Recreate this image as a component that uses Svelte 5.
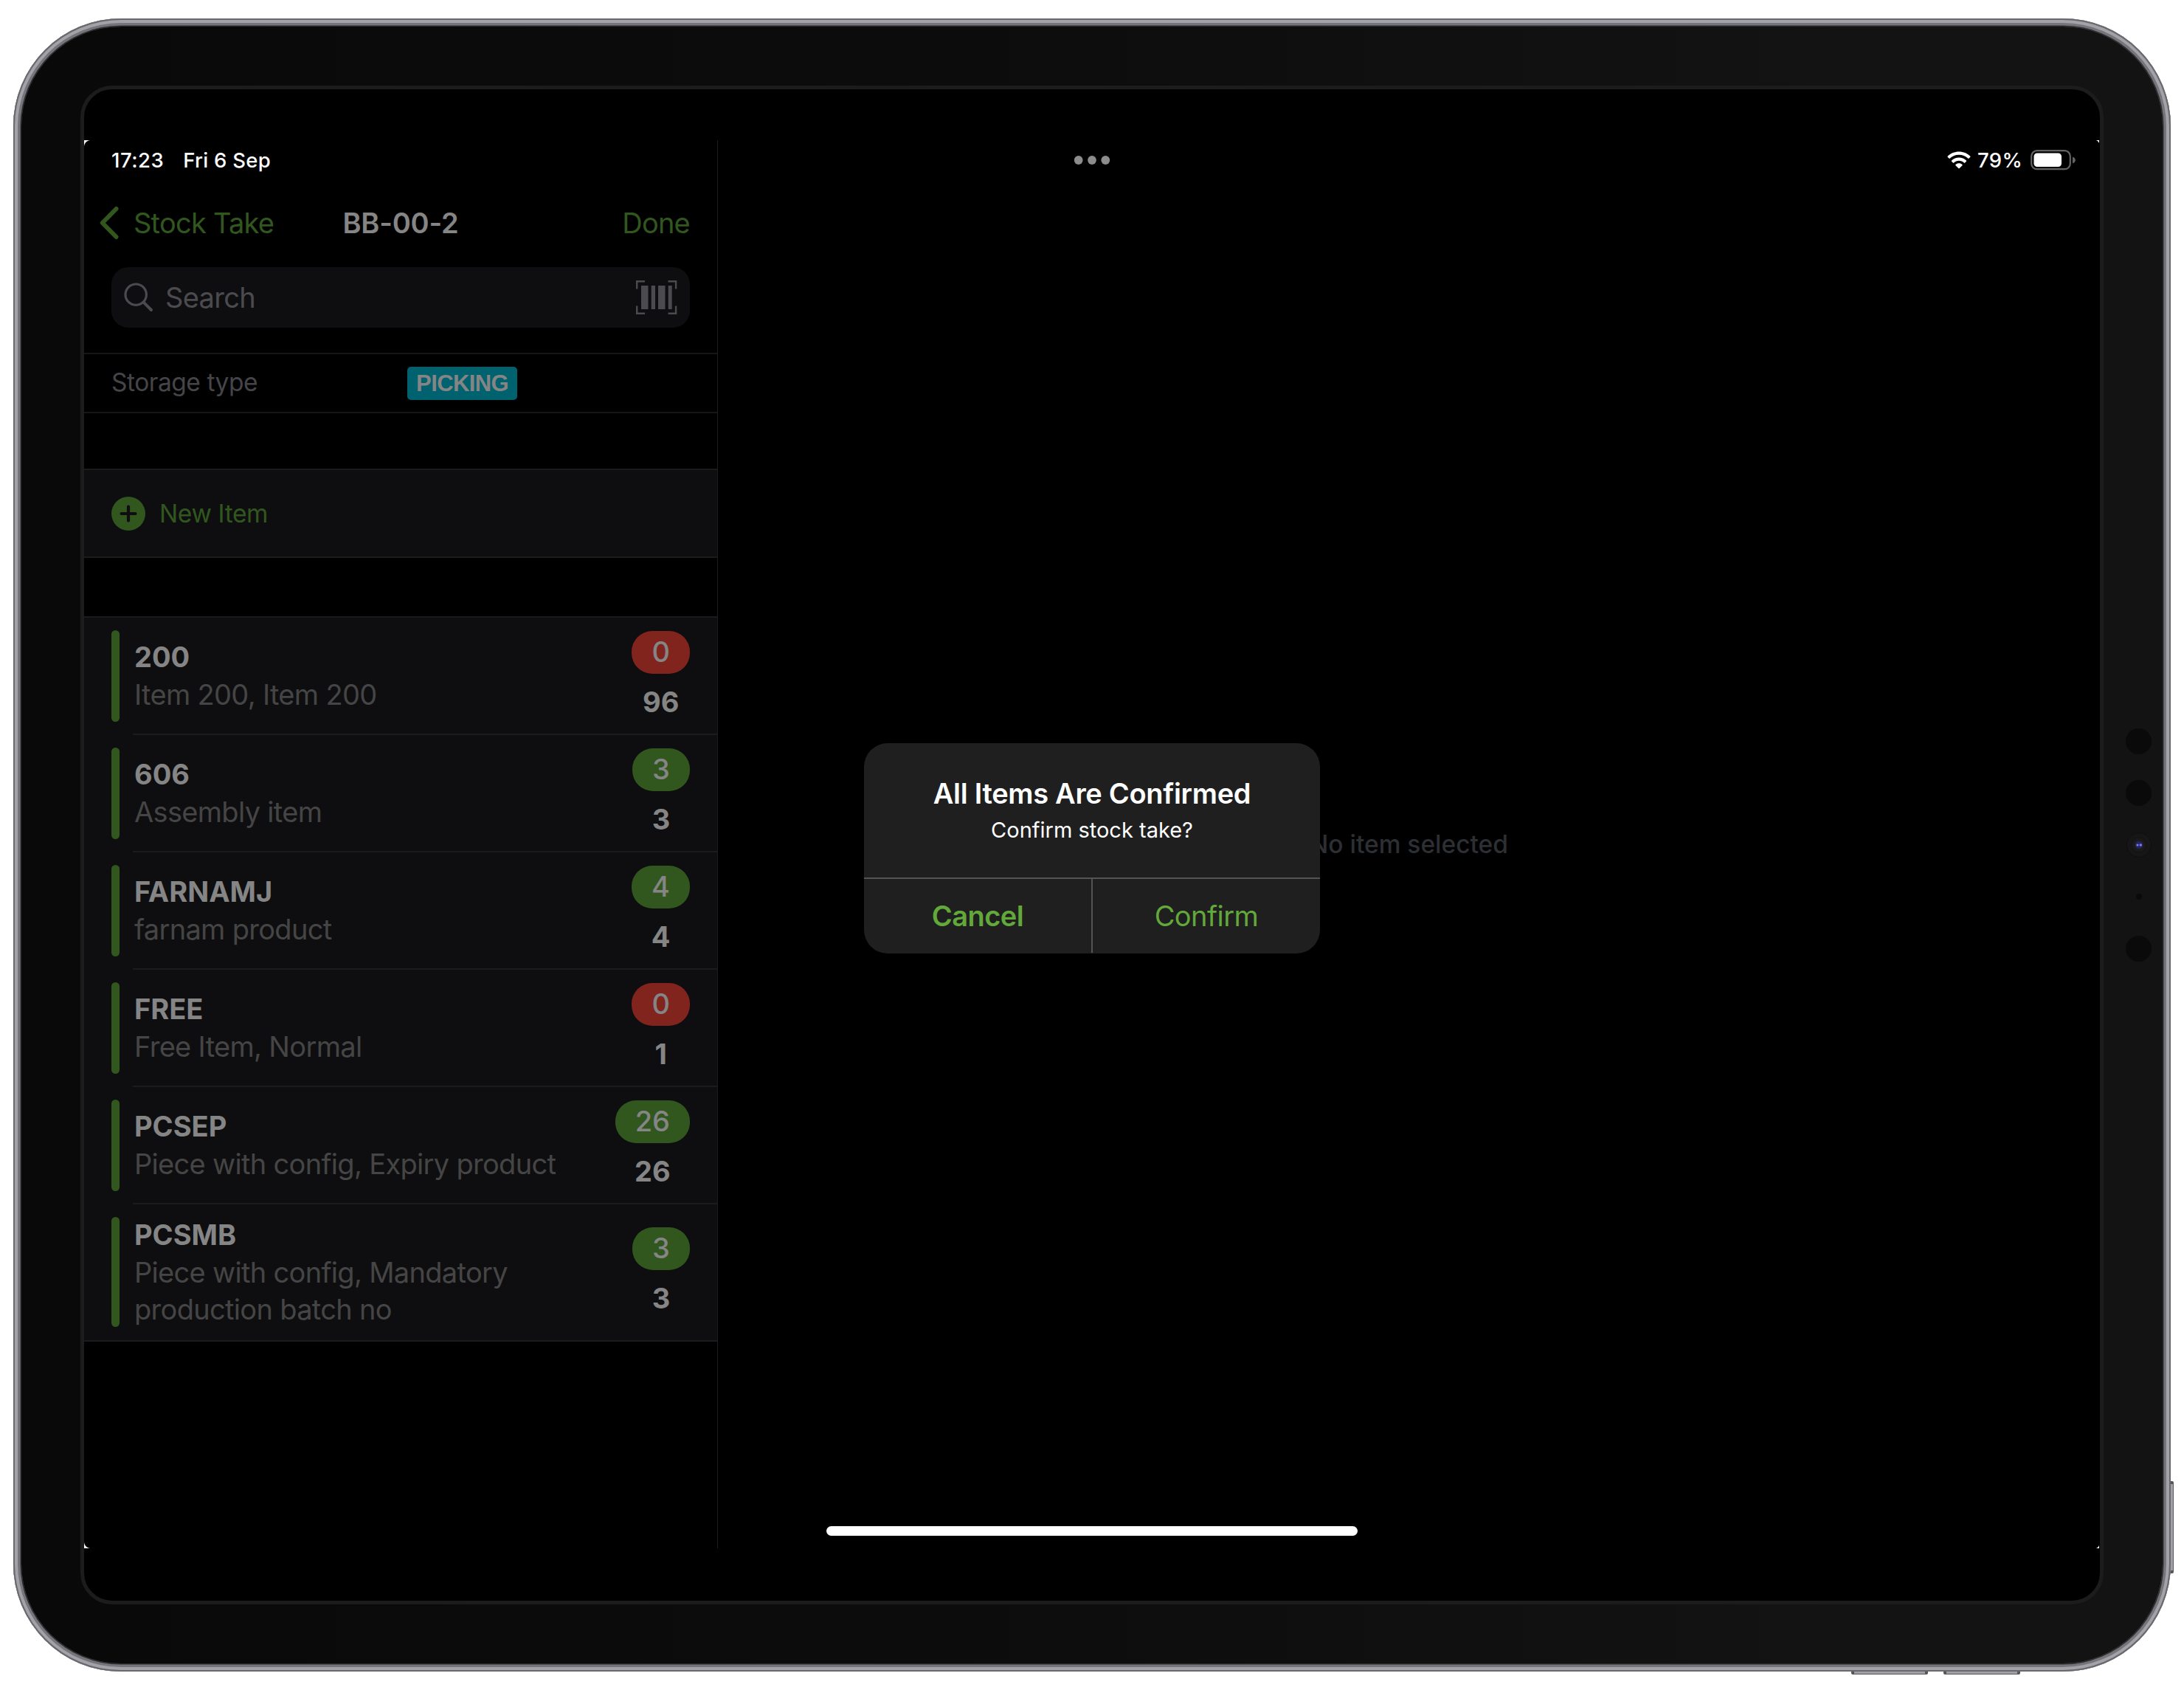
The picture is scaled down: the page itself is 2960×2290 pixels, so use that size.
<script lang="ts">
	interface StockItem {
		code: string;
		name: string;
		counted: number;
		expected: number;
	}

	const items: StockItem[] = [
		{ code: '200', name: 'Item 200, Item 200', counted: 0, expected: 96 },
		{ code: '606', name: 'Assembly item', counted: 3, expected: 3 },
		{ code: 'FARNAMJ', name: 'farnam product', counted: 4, expected: 4 },
		{ code: 'FREE', name: 'Free Item, Normal', counted: 0, expected: 1 },
		{ code: 'PCSEP', name: 'Piece with config, Expiry product', counted: 26, expected: 26 },
		{ code: 'PCSMB', name: 'Piece with config, Mandatory production batch no', counted: 3, expected: 3 }
	];
</script>

<div class="stage">
	<div class="hw volume-up"></div>
	<div class="hw volume-down"></div>
	<div class="hw power"></div>
	<div class="device">
		<div class="bezel">
			<span class="sensor first"></span>
			<span class="sensor second"></span>
			<svg class="camera" viewBox="0 0 36 36">
				<circle cx="18" cy="18" r="16.5" fill="#161617" stroke="#0e0e0f" />
				<circle cx="18" cy="18" r="10" fill="#19191b" stroke="#121213" />
				<circle cx="18" cy="18" r="5.5" fill="#25282e" />
				<circle cx="18" cy="18" r="4.2" fill="#1f2470" />
				<circle cx="16" cy="18" r="1.6" fill="#6d86e8" />
				<circle cx="20.3" cy="18" r="1.8" fill="#8a6df0" />
			</svg>
			<span class="mic"></span>
			<span class="sensor third"></span>

			<div class="glass">
				<div class="screen">
					<aside class="sidebar">
						<div class="status left">
							<span class="time">17:23</span>
							<span class="date">Fri 6 Sep</span>
						</div>

						<nav>
							<button class="back">
								<svg width="26" height="46" viewBox="0 0 26 46">
									<path d="M22.5 4 3.8 23l18.7 19" fill="none" stroke="currentColor" stroke-width="6" stroke-linecap="round" stroke-linejoin="round" />
								</svg>
								<span>Stock Take</span>
							</button>
							<h1>BB-00-2</h1>
							<button class="done">Done</button>
						</nav>

						<div class="search">
							<svg class="lens" width="40" height="40" viewBox="0 0 40 40" fill="none" stroke="currentColor" stroke-linecap="round">
								<circle cx="16.2" cy="16.2" r="14.2" stroke-width="3.2" />
								<path d="M26.6 26.6 37 37" stroke-width="4" />
							</svg>
							<span>Search</span>
							<svg class="barcode" width="56" height="46" viewBox="0 0 56 46">
								<path d="M12 1.2H1.2V11.5M43.500 1.200h10.600V11.500M12 44.700H1.200V34.500M43.500 44.700h10.600V34.500" fill="none" stroke="currentColor" stroke-width="2.4" />
								<path d="M7 7h9.500v32H7zM20.700 7H26v32h-5.300zM30 7h9.500v32H30zM43.700 7h5v32h-5z" fill="currentColor" />
							</svg>
						</div>

						<div class="storage">
							<span class="label">Storage type</span>
							<span class="tag">PICKING</span>
						</div>

						<div class="new-item">
							<svg width="46" height="46" viewBox="0 0 46 46">
								<circle cx="23" cy="23" r="23" fill="#31571f" />
								<path d="M23 13.5v19M13.5 23h19" stroke="#0e0e10" stroke-width="4.2" stroke-linecap="round" />
							</svg>
							<span>New Item</span>
						</div>

						<ul>
							{#each items as item}
								<li>
									<span class="bar"></span>
									<div class="row">
										<div class="text">
											<strong>{item.code}</strong>
											<p>{item.name}</p>
										</div>
										<div class="counts">
											<span class="pill" class:empty={item.counted === 0}>{item.counted}</span>
											<span class="expected">{item.expected}</span>
										</div>
									</div>
								</li>
							{/each}
						</ul>
					</aside>

					<main>
						<div class="status right">
							<svg width="32" height="24" viewBox="0 0 32 24" fill="#fff">
								<path d="M16 .5c6 0 11.3 2.3 15.2 6.1.4.4.4.9 0 1.3l-1.700 1.700c-.4.4-.9.4-1.300 0C25 6.500 20.700 4.700 16 4.700S7 6.500 3.800 9.600c-.4.4-.9.4-1.300 0L.8 7.900c-.4-.4-.4-.9 0-1.300C4.700 2.800 10 .5 16 .5z" />
								<path d="M16 8.400c3.800 0 7.300 1.500 9.900 4 .4.4.4.9 0 1.300l-1.800 1.700c-.4.4-.9.4-1.300 0-1.800-1.700-4.200-2.700-6.800-2.700s-5 1-6.800 2.700c-.4.4-.9.4-1.300 0l-1.800-1.700c-.4-.4-.4-.9 0-1.300 2.600-2.500 6.100-4 9.900-4z" />
								<path d="M16 16.200c1.700 0 3.300.7 4.500 1.700.4.4.4.9 0 1.300l-3.800 3.800c-.4.4-1 .4-1.400 0l-3.800-3.800c-.4-.4-.4-.9 0-1.300 1.200-1 2.800-1.700 4.500-1.700z" />
							</svg>
							<span>79%</span>
							<svg width="61" height="28" viewBox="0 0 61 28">
								<rect x="1.2" y="1.2" width="52.6" height="25" rx="7.5" fill="none" stroke="#636363" stroke-width="2.2" />
								<rect x="4.5" y="4.5" width="37.5" height="18.5" rx="4.5" fill="#fff" />
								<path d="M57 9.500c2.400.8 3.800 2.400 3.800 4.400s-1.400 3.600-3.800 4.400z" fill="#636363" />
							</svg>
						</div>
						<p class="placeholder">No item selected</p>
					</main>

					<svg class="multitask" width="50" height="12" viewBox="0 0 50 12" fill="#8c8c8c">
						<circle cx="6.7" cy="6" r="5.9" />
						<circle cx="25" cy="6" r="5.9" />
						<circle cx="43.3" cy="6" r="5.9" />
					</svg>

					<div class="alert">
						<div class="message">
							<h2>All Items Are Confirmed</h2>
							<p>Confirm stock take?</p>
						</div>
						<div class="actions">
							<button class="cancel">Cancel</button>
							<button>Confirm</button>
						</div>
					</div>

					<div class="home"></div>
				</div>
			</div>
		</div>
	</div>
</div>

<style>
	:global(body) {
		background: #fff;
	}
	.stage {
		position: relative;
		box-sizing: border-box;
		width: 2960px;
		height: 2290px;
		padding: 25px 0 0 18px;
		overflow: hidden;
		font-family: Inter, 'Liberation Sans', sans-serif;
	}
	h1, h2, p, ul {
		margin: 0;
		padding: 0;
	}
	button {
		padding: 0;
		border: 0;
		background: none;
		color: inherit;
		font: inherit;
		letter-spacing: inherit;
	}
	svg {
		flex: none;
		display: block;
	}

	/* tablet body */
	.device {
		position: relative;
		box-sizing: border-box;
		width: 2924px;
		height: 2240px;
		padding: 11px;
		border-radius: 146px;
		background: #77777d;
		box-shadow: inset 0 0 0 2px #68686d, inset 0 0 0 6px #a2a3a9, inset 0 0 2px 9px #75757b;
	}
	.bezel {
		position: relative;
		box-sizing: border-box;
		width: 2902px;
		height: 2218px;
		padding: 80px;
		border-radius: 135px;
		background: linear-gradient(90deg, #090909, #0d0d0e 50%, #131313 85%);
		box-shadow: 0 0 0 1.5px #2d2d2f;
	}
	.glass {
		box-sizing: border-box;
		width: 2742px;
		height: 2058px;
		border: 5px solid #1c1c1c;
		border-radius: 43px;
		padding: 69px 0 71px;
		background: #000;
	}
	.hw {
		position: absolute;
		border-radius: 2px;
		background: #a0a0a6;
		border: 0 solid #55555b;
	}
	.volume-up, .volume-down {
		top: 2262px;
		width: 96px;
		height: 6px;
		border-width: 0 4px 1px;
	}
	.volume-up {
		left: 2509px;
	}
	.volume-down {
		left: 2634px;
	}
	.power {
		left: 2938px;
		top: 2007px;
		width: 7px;
		height: 117px;
		border-width: 4px 1px 4px 0;
	}
	.sensor {
		position: absolute;
		left: 2852px;
		width: 35px;
		height: 35px;
		border-radius: 50%;
		background: #0a0a0a;
	}
	.first {
		top: 951px;
	}
	.second {
		top: 1021px;
	}
	.third {
		top: 1232px;
	}
	.camera {
		position: absolute;
		left: 2852px;
		top: 1091px;
		width: 36px;
		height: 36px;
	}
	.mic {
		position: absolute;
		left: 2866px;
		top: 1175px;
		width: 8px;
		height: 8px;
		border-radius: 50%;
		background: #0a0a0a;
	}

	/* the app window leaves tiny white notches at its corners */
	.screen {
		position: relative;
		display: flex;
		height: 1908px;
		background:
			radial-gradient(circle at 100% 100%, #000 8.5px, #fff 9.5px) 0 0 / 9px 9px no-repeat,
			radial-gradient(circle at 0 100%, #000 8.5px, #fff 9.5px) calc(100% - 1px) 0 / 8px 8px no-repeat,
			radial-gradient(circle at 100% 0, #000 8.5px, #fff 9.5px) 0 100% / 9px 9px no-repeat,
			radial-gradient(circle at 0 0, #000 8.5px, #fff 9.5px) calc(100% - 1px) 100% / 8px 8px no-repeat,
			#000;
	}
	.sidebar {
		box-sizing: border-box;
		width: 859px;
		border-right: 1px solid #1c1c1e;
	}
	main {
		flex: 1;
		display: flex;
		flex-direction: column;
	}
	.status {
		display: flex;
		align-items: center;
		height: 54px;
		color: #fff;
		font-size: 27.5px;
		font-weight: 500;
		letter-spacing: 0.01em;
	}
	.status.left {
		padding-left: 37px;
		gap: 26px;
	}
	.time {
		letter-spacing: 0.018em;
	}
	.status.right {
		justify-content: flex-end;
		padding-right: 33px;
	}
	.status.right span {
		margin: 0 11px 0 9px;
	}

	nav {
		display: grid;
		grid-template-columns: 1fr auto 1fr;
		align-items: center;
		height: 116px;
		padding: 0 37px;
		color: #31571f;
		font-size: 38px;
		letter-spacing: -0.02em;
		line-height: 46px;
	}
	.back {
		display: flex;
		align-items: center;
		gap: 20px;
		margin-left: -16px;
		text-align: left;
	}
	h1 {
		color: #858585;
		font-size: 38px;
		font-weight: 600;
		letter-spacing: -0.004em;
	}
	.done {
		text-align: right;
	}

	.search {
		display: flex;
		align-items: center;
		height: 82px;
		margin: 2px 37px 0;
		padding: 0 17px;
		border-radius: 23px;
		background: #0e0e10;
		color: #4b4b4f;
		font-size: 38px;
		letter-spacing: -0.018em;
	}
	.search span {
		flex: 1;
		margin-left: 16px;
		padding-bottom: 1px;
	}

	.storage {
		box-sizing: border-box;
		display: flex;
		align-items: center;
		height: 82px;
		margin-top: 34px;
		padding-left: 37px;
		border: solid #161618;
		border-width: 2px 0;
		color: #454549;
		font-size: 33.5px;
		letter-spacing: -0.014em;
	}
	.storage .label {
		width: 401px;
		padding-bottom: 2px;
	}
	.tag {
		width: 149px;
		height: 45px;
		border-radius: 5px;
		background: #00616f;
		color: #858585;
		font: bold 31px/45px 'Liberation Sans', sans-serif;
		letter-spacing: -0.02em;
		text-align: center;
	}

	.new-item {
		box-sizing: border-box;
		display: flex;
		align-items: center;
		gap: 19px;
		height: 121px;
		margin-top: 75px;
		padding-left: 37px;
		border: solid #1b1b1d;
		border-width: 2px 0;
		background: #0e0e10;
		color: #31571f;
		font-size: 33.5px;
		letter-spacing: -0.011em;
	}

	ul {
		margin-top: 79px;
		border: solid #1b1b1d;
		border-width: 2px 0;
		background: #0e0e10;
		list-style: none;
	}
	li {
		display: flex;
		padding-left: 37px;
	}
	.bar {
		width: 11px;
		margin: 17px 0 18px;
		border-radius: 6px;
		background: #31571f;
	}
	.row {
		box-sizing: border-box;
		flex: 1;
		display: flex;
		align-items: center;
		justify-content: space-between;
		min-height: 159px;
		margin-left: 18px;
		padding: 0 37px 2px 2px;
		border-bottom: 2px solid #1b1b1d;
		font-size: 38px;
	}
	li:last-child .row {
		height: 184px;
		border-bottom: 0;
	}
	.text {
		width: 600px;
		color: #454545;
		letter-spacing: -0.018em;
		line-height: 50px;
	}
	strong {
		display: block;
		color: #858585;
		letter-spacing: 0;
		line-height: 52px;
	}
	.counts {
		display: flex;
		flex-direction: column;
		align-items: center;
		color: #858585;
	}
	.pill {
		box-sizing: border-box;
		min-width: 78px;
		height: 58px;
		padding: 0 27px;
		border-radius: 28px;
		background: #31571f;
		font-weight: 500;
		line-height: 57px;
		text-align: center;
	}
	.pill.empty {
		background: #82241e;
	}
	.expected {
		margin-top: 14px;
		font-weight: 700;
		line-height: 48px;
	}

	.placeholder {
		margin: auto;
		padding-bottom: 54px;
		color: #2c2f33;
		font-size: 33.5px;
		font-weight: 500;
	}
	.multitask {
		position: absolute;
		left: 1341px;
		top: 21px;
	}
	.home {
		position: absolute;
		left: 1006px;
		bottom: 17px;
		width: 720px;
		height: 13px;
		border-radius: 7px;
		background: #fff;
	}

	.alert {
		position: absolute;
		left: 1057px;
		top: 817px;
		width: 618px;
		height: 285px;
		border-radius: 32px;
		background: #1f1f1f;
		overflow: hidden;
		text-align: center;
	}
	.message {
		box-sizing: border-box;
		height: 184px;
		padding-top: 43px;
		border-bottom: 2px solid #545456;
		color: #fff;
		font-size: 29px;
		line-height: 50px;
	}
	h2 {
		font-size: 38px;
		font-weight: 600;
		letter-spacing: -0.008em;
		line-height: 50px;
	}
	.actions {
		display: flex;
		height: 100px;
		color: #62a83b;
		font-size: 38px;
		letter-spacing: -0.014em;
	}
	.actions button {
		flex: 1;
	}
	.actions .cancel {
		border-right: 2px solid #545456;
		font-weight: 600;
	}
</style>
